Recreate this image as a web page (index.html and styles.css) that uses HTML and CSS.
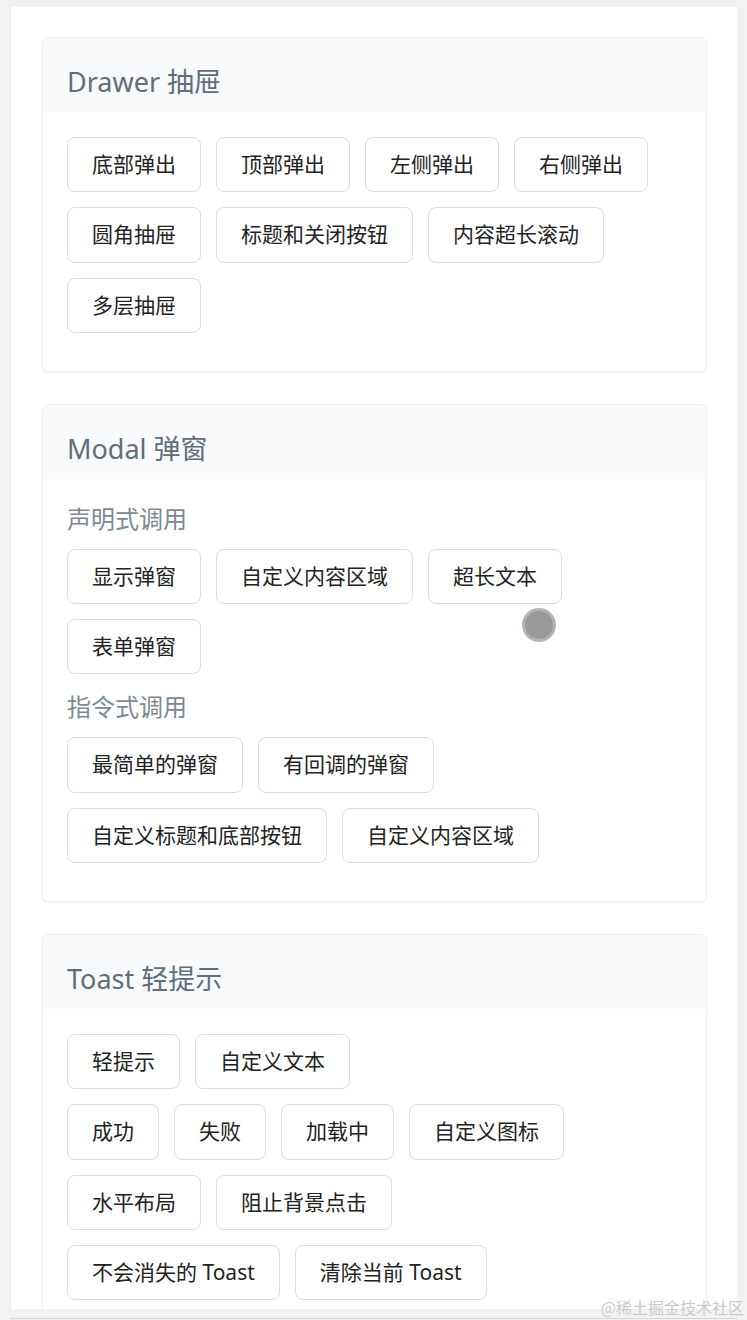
FILE: index.html
```html
<!DOCTYPE html>
<html lang="zh-CN">
<head>
<meta charset="utf-8">
<title>Demo</title>
<link rel="stylesheet" href="styles.css">
</head>
<body>
<div class="page">
  <div class="container">
    <section class="card">
      <div class="card-head"><h2 class="card-title">Drawer 抽屉</h2></div>
      <div class="card-body">
        <div class="btn-group">
          <button class="btn">底部弹出</button>
          <button class="btn">顶部弹出</button>
          <button class="btn">左侧弹出</button>
          <button class="btn">右侧弹出</button>
          <button class="btn">圆角抽屉</button>
          <button class="btn">标题和关闭按钮</button>
          <button class="btn">内容超长滚动</button>
          <button class="btn">多层抽屉</button>
        </div>
      </div>
    </section>

    <section class="card">
      <div class="card-head"><h2 class="card-title">Modal 弹窗</h2></div>
      <div class="card-body">
        <h3 class="sub-title">声明式调用</h3>
        <div class="btn-group">
          <button class="btn">显示弹窗</button>
          <button class="btn">自定义内容区域</button>
          <button class="btn">超长文本</button>
          <button class="btn">表单弹窗</button>
        </div>
        <h3 class="sub-title">指令式调用</h3>
        <div class="btn-group">
          <button class="btn">最简单的弹窗</button>
          <button class="btn">有回调的弹窗</button>
          <button class="btn">自定义标题和底部按钮</button>
          <button class="btn">自定义内容区域</button>
        </div>
      </div>
    </section>

    <section class="card">
      <div class="card-head"><h2 class="card-title">Toast 轻提示</h2></div>
      <div class="card-body">
        <div class="btn-group">
          <button class="btn">轻提示</button>
          <button class="btn">自定义文本</button>
        </div>
        <div class="btn-group">
          <button class="btn">成功</button>
          <button class="btn">失败</button>
          <button class="btn">加载中</button>
          <button class="btn">自定义图标</button>
        </div>
        <div class="btn-group">
          <button class="btn">水平布局</button>
          <button class="btn">阻止背景点击</button>
        </div>
        <div class="btn-group">
          <button class="btn">不会消失的 Toast</button>
          <button class="btn">清除当前 Toast</button>
        </div>
      </div>
    </section>
  </div>
  <div class="bottom-line"></div>
  <div class="touch-dot"></div>
  <div class="watermark">@稀土掘金技术社区</div>
</div>
</body>
</html>
```

FILE: styles.css
```css
* { box-sizing: border-box; }

html, body {
  margin: 0;
  padding: 0;
  background: #f2f2f2;
}

body {
  font-family: "Noto Sans", "Noto Sans CJK SC", sans-serif;
}

.page {
  position: relative;
  width: 747px;
  height: 1320px;
  padding: 7px 10px 0 10px;
  overflow: hidden;
}

.container {
  background: #ffffff;
  height: 1302px;
  overflow: hidden;
  padding: 30px 30px 0 31px;
  border-left: 1px solid #ececec;
}

.card {
  border: 1px solid #efefef;
  border-radius: 6px;
  box-shadow: 0 1px 2px rgba(0, 0, 0, 0.05);
  margin-bottom: 32px;
  overflow: hidden;
  background: #fff;
}

.card-head {
  background: #f9fafb;
  height: 74px;
  padding: 24px 24px 0 24px;
}

.card-title {
  margin: 0;
  font-size: 27px;
  line-height: 40px;
  font-weight: 400;
  color: #5f6d7c;
}

.card-body {
  padding: 25px 24px 23px 24px;
}

.sub-title {
  margin: 0 0 15px 0;
  font-size: 24px;
  line-height: 30px;
  font-weight: 400;
  color: #7d8893;
}

.btn-group + .sub-title {
  padding-top: 3px;
}

.btn-group {
  display: flex;
  flex-wrap: wrap;
  gap: 15px;
  margin-bottom: 15px;
}

.btn {
  font-family: "Noto Sans", "Noto Sans CJK SC", sans-serif;
  font-size: 21px;
  line-height: 29.3px;
  padding: 12px 24px;
  border: 1px solid #dcdcdc;
  border-radius: 8px;
  background: #ffffff;
  color: #222222;
  white-space: nowrap;
}

.bottom-line {
  margin-top: 9px;
  height: 1px;
  background: #d6d6d6;
}

.touch-dot {
  position: absolute;
  left: 522px;
  top: 608px;
  width: 34px;
  height: 34px;
  border-radius: 50%;
  background: #9a9899;
  border: 3px solid rgba(190, 188, 189, 0.8);
}

.watermark {
  position: absolute;
  right: 3px;
  top: 1295px;
  font-family: "Noto Sans CJK SC", sans-serif;
  font-size: 16px;
  line-height: 24px;
  color: #c9c9c9;
  text-shadow: 0 0 1px #ffffff;
}
```
